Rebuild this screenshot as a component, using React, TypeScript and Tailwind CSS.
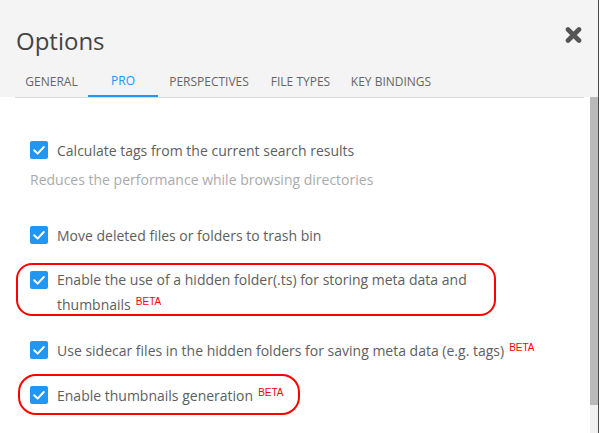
import React from 'react'

const tabs = [
  { label: 'General', w: 'w-[73px]' },
  { label: 'Pro', w: 'w-[70px]', active: true },
  { label: 'Perspectives', w: 'w-[102px]' },
  { label: 'File Types', w: 'w-[81px]' },
  { label: 'Key Bindings', w: 'w-[100px]' },
]

function Check() {
  return (
    <span className="flex h-[18px] w-[18px] shrink-0 items-center justify-center rounded-[2px] bg-[#2196f3]">
      <svg viewBox="0 0 18 18" className="h-[18px] w-[18px]">
        <path d="M4.2 9.3 L7.6 12.6 L13.8 6" fill="none" stroke="#fff" strokeWidth="2" strokeLinecap="round" strokeLinejoin="round" />
      </svg>
    </span>
  )
}

function Beta() {
  return (
    <sup className="relative -top-[5px] ml-[5px] font-['Liberation_Sans',sans-serif] text-[10px] text-[#f00]">BETA</sup>
  )
}

export default function App() {
  return (
    <div className="relative flex h-[433px] w-[599px] flex-col overflow-hidden border-r border-[#4a4a4a] bg-white font-['Open_Sans',sans-serif] text-[#5e5e5e]">
      <div className="h-[97px] shrink-0 bg-[#f4f4f4] pl-[15px] pr-[14px]">
        <div className="flex items-start justify-between pt-[25px]">
          <h1 className="pl-[1px] text-[24px] leading-[32px] text-[#444]">Options</h1>
          <svg viewBox="0 0 17 16" className="mr-[2px] mt-[2px] h-[16px] w-[17px]">
            <path d="M3 2.5 L14 13.5 M14 2.5 L3 13.5" stroke="#555" strokeWidth="4.6" strokeLinecap="round" />
          </svg>
        </div>
        <div className="mt-[9px] flex border-b border-[#dcdcdc]">
          {tabs.map((t) => (
            <div
              key={t.label}
              className={`${t.w} flex h-[31px] items-center justify-center text-[12px] uppercase ${t.active ? 'border-b-2 border-[#2196f3] text-[#2196f3]' : 'text-[#666]'}`}
            >
              <span className="pt-[1px]">{t.label}</span>
            </div>
          ))}
        </div>
      </div>

      <div className="flex min-h-0 flex-1">
        <div className="flex-1 pl-[30px] pt-[41px] text-[14px]">
          <div className="flex h-[24px] items-center gap-[9px]">
            <Check />
            <span>Calculate tags from the current search results</span>
          </div>
          <p className="mt-[8px] leading-[20px] text-[#aaa]">Reduces the performance while browsing directories</p>

          <div className="mt-[33px] flex h-[24px] items-center gap-[9px]">
            <Check />
            <span>Move deleted files or folders to trash bin</span>
          </div>

          <div className="mt-[20px] flex items-start gap-[9px]">
            <div className="mt-[4px]">
              <Check />
            </div>
            <span className="leading-[25px]">
              Enable the use of a hidden folder(.ts) for storing meta data and
              <br />
              thumbnails
              <Beta />
            </span>
          </div>

          <div className="mt-[21px] flex h-[24px] items-center gap-[9px]">
            <Check />
            <span>
              Use sidecar files in the hidden folders for saving meta data (e.g. tags)
              <Beta />
            </span>
          </div>

          <div className="mt-[21px] flex h-[24px] items-center gap-[9px]">
            <Check />
            <span>
              Enable thumbnails generation
              <Beta />
            </span>
          </div>
        </div>
        <div className="flex w-[8px] flex-col bg-[#f1f1f1]">
          <div className="h-[308px] bg-[#bababa]" />
        </div>
      </div>

      <div className="pointer-events-none absolute left-[16px] top-[263px] h-[53px] w-[480px] rounded-[16px] border-2 border-[#f00]" />
      <div className="pointer-events-none absolute left-[18px] top-[374px] h-[41px] w-[282px] rounded-[18px] border-2 border-[#f00]" />
    </div>
  )
}
